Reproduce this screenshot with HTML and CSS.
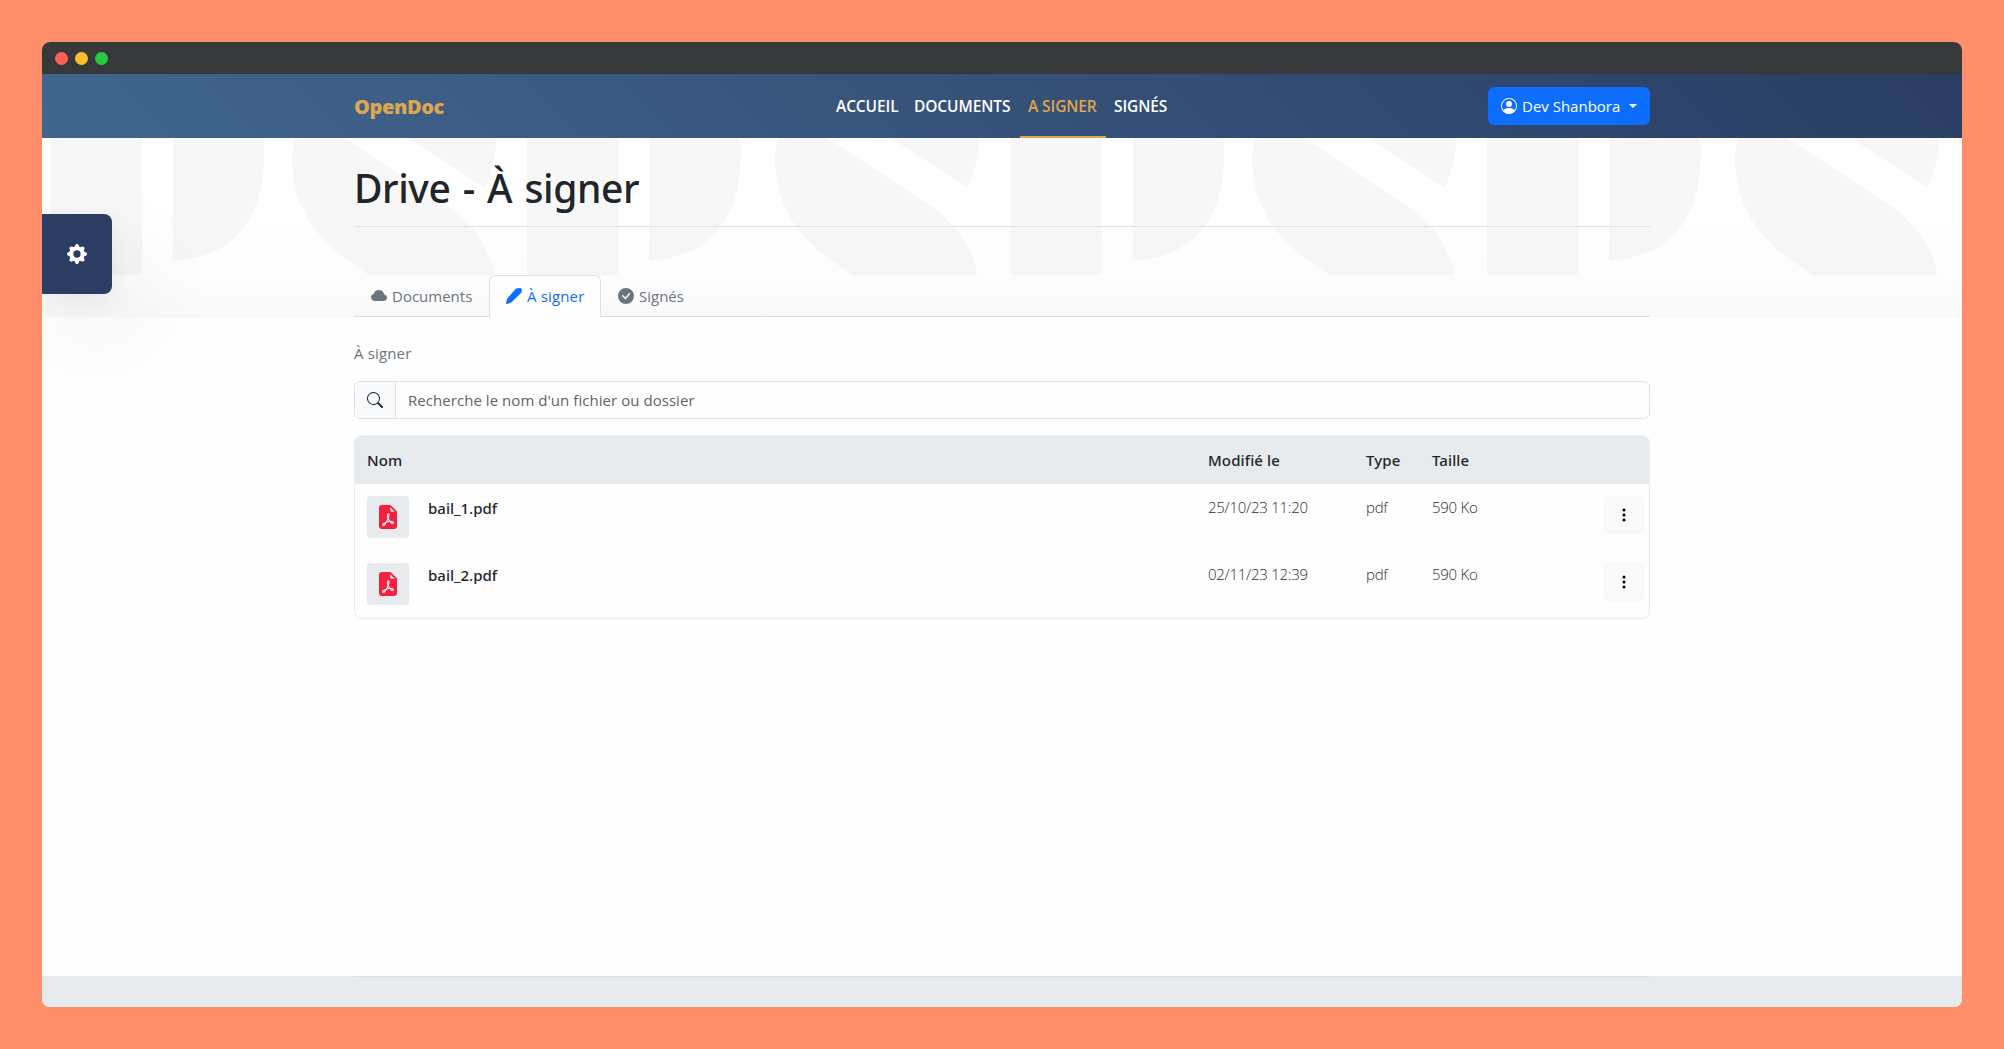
FILE: index.html
```html
<!DOCTYPE html>
<html lang="fr">
<head>
<meta charset="utf-8">
<title>OpenDoc - À signer</title>
<link rel="stylesheet" href="styles.css">
</head>
<body>
<svg class="defs" width="0" height="0" aria-hidden="true">
  <defs>
    <g id="mark-d">
      <path d="M0 0H91.500V122L90.500 137H0Z"/>
      <path d="M122 0H213.500V22C213.500 80 180 122 122 122Z"/>
    </g>
    <g id="mark-s">
      <path d="M2.700 0H52L156 68C182 86 200 115 202 137H77L52 119C22 98 0 64 0 23Q0 10 2.700 0Z"/>
      <path d="M116 0H204.500Q204.500 26 192.500 50Z"/>
    </g>
    <symbol id="i-pdf" viewBox="0 0 16 16">
      <path d="M5.523 12.424q.21-.124.459-.238a8 8 0 0 1-.45.606c-.28.337-.498.516-.635.572l-.035.012a.3.300 0 0 1-.026-.044c-.056-.11-.054-.216.040-.360.106-.165.319-.354.647-.548m2.455-1.647q-.178.037-.356.078a21 21 0 0 0 .5-1.050 12 12 0 0 0 .510.858q-.326.048-.654.114m2.525.939a4 4 0 0 1-.435-.410q.344.007.612.054c.317.057.466.147.518.209a.1.100 0 0 1 .026.064.44.440 0 0 1-.060.200.300.300 0 0 1-.094.124.1.100 0 0 1-.069.015c-.090-.003-.258-.066-.498-.256M8.278 6.970c-.040.244-.108.524-.200.829a5 5 0 0 1-.089-.346c-.076-.353-.087-.630-.046-.822.038-.177.110-.248.196-.283a.5.500 0 0 1 .145-.040c.013.030.028.092.032.198q.008.183-.038.465z"/>
      <path fill-rule="evenodd" d="M4 0h5.293A1 1 0 0 1 10 .293L13.707 4a1 1 0 0 1 .293.707V14a2 2 0 0 1-2 2H4a2 2 0 0 1-2-2V2a2 2 0 0 1 2-2m5.500 1.500v2a1 1 0 0 0 1 1h2zM4.165 13.668c.090.180.230.343.438.419.207.075.412.040.580-.030.318-.130.635-.436.926-.786.333-.401.683-.927 1.021-1.510a11.600 11.600 0 0 1 1.997-.406c.300.383.610.713.910.950.280.220.603.403.934.417a.86.860 0 0 0 .510-.138c.155-.101.270-.247.354-.416.090-.181.145-.370.138-.563a.84.840 0 0 0-.200-.518c-.226-.270-.596-.400-.960-.465a5.800 5.800 0 0 0-1.335-.050 11 11 0 0 1-.980-1.686c.250-.660.437-1.284.520-1.794.036-.218.055-.426.048-.614a1.240 1.240 0 0 0-.127-.538.700.700 0 0 0-.477-.365c-.202-.043-.410 0-.601.077-.377.150-.576.470-.651.823-.073.340-.040.736.046 1.136.088.406.238.848.430 1.295a20 20 0 0 1-1.062 2.227 7.700 7.700 0 0 0-1.482.645c-.370.220-.699.480-.897.787-.210.326-.275.714-.080 1.103"/>
    </symbol>
    <symbol id="i-dots" viewBox="0 0 16 16"><path d="M9.500 13a1.500 1.500 0 1 1-3 0 1.500 1.500 0 0 1 3 0m0-5a1.500 1.500 0 1 1-3 0 1.500 1.500 0 0 1 3 0m0-5a1.500 1.500 0 1 1-3 0 1.500 1.500 0 0 1 3 0"/></symbol>
  </defs>
</svg>

<div class="window">
  <div class="titlebar"><span class="light red"></span><span class="light yellow"></span><span class="light green"></span></div>

  <header class="navbar">
    <div class="container bar">
      <a class="brand">OpenDoc</a>
      <nav class="menu">
        <a class="m1">ACCUEIL</a><a class="m2">DOCUMENTS</a><a class="m3 active">A SIGNER</a><a class="m4">SIGNÉS</a>
      </nav>
      <button class="user">
        <svg class="icon" viewBox="0 0 16 16"><path d="M11 6a3 3 0 1 1-6 0 3 3 0 0 1 6 0"/><path fill-rule="evenodd" d="M0 8a8 8 0 1 1 16 0A8 8 0 0 1 0 8m8-7a7 7 0 0 0-5.468 11.370C3.242 11.226 4.805 10 8 10s4.757 1.225 5.468 2.370A7 7 0 0 0 8 1"/></svg>
        <span class="user-name">Dev Shanbora</span><span class="caret"></span>
      </button>
    </div>
  </header>

  <section class="hero">
    <svg class="pattern" width="1920" height="137" viewBox="0 0 1920 137">
      <g id="tile"><use href="#mark-d" x="8.500"/><use href="#mark-s" x="250"/><use href="#mark-d" x="485"/><use href="#mark-s" x="733"/></g>
      <use href="#tile" x="960"/>
    </svg>
    <div class="container hero-body">
      <h1>Drive - À signer</h1>
      <div class="tabs">
        <a class="tab t1"><svg class="icon" viewBox="0 0 16 16"><path d="M4.406 3.342A5.530 5.530 0 0 1 8 2c2.690 0 4.923 2 5.166 4.579C14.758 6.804 16 8.137 16 9.773 16 11.569 14.502 13 12.687 13H3.781C1.708 13 0 11.366 0 9.318c0-1.763 1.266-3.223 2.942-3.593.143-.863.698-1.723 1.464-2.383"/></svg><span>Documents</span></a>
        <a class="tab t2 active"><svg class="icon" viewBox="0 0 16 16"><path d="M9.300 1.200Q10.500 0 12 .2L14.200 0Q16 .1 15.900 2L15.500 4.600 5.800 14Q3.500 15.400 0 16 .2 12.600 1.700 10Z"/></svg><span>À signer</span></a>
        <a class="tab t3"><svg class="icon" viewBox="0 0 16 16"><path d="M16 8A8 8 0 1 1 0 8a8 8 0 0 1 16 0m-3.970-3.030a.75.750 0 0 0-1.080.022L7.477 9.417 5.384 7.323a.75.750 0 0 0-1.060 1.060L6.970 11.030a.75.750 0 0 0 1.079-.020l3.992-4.990a.75.750 0 0 0-.010-1.050z"/></svg><span>Signés</span></a>
      </div>
    </div>
  </section>

  <main class="container content">
    <p class="crumb">À signer</p>
    <div class="search">
      <span class="search-icon"><svg class="icon" viewBox="0 0 16 16"><path d="M11.742 10.344a6.500 6.500 0 1 0-1.397 1.398h-.001q.044.060.098.115l3.850 3.850a1 1 0 0 0 1.415-1.414l-3.850-3.850a1 1 0 0 0-.115-.100zM12 6.500a5.500 5.500 0 1 1-11 0 5.500 5.500 0 0 1 11 0"/></svg></span>
      <span class="search-field">Recherche le nom d'un fichier ou dossier</span>
    </div>
    <div class="files">
      <div class="row head"><span>Nom</span><span>Modifié le</span><span>Type</span><span>Taille</span><span></span></div>
      <div class="row">
        <div class="name"><span class="thumb"><svg viewBox="0 0 16 16"><use href="#i-pdf"/></svg></span><span class="file">bail_1.pdf</span></div>
        <span class="meta">25/10/23 11:20</span><span class="meta">pdf</span><span class="meta">590 Ko</span>
        <button class="more"><svg viewBox="0 0 16 16"><use href="#i-dots"/></svg></button>
      </div>
      <div class="row">
        <div class="name"><span class="thumb"><svg viewBox="0 0 16 16"><use href="#i-pdf"/></svg></span><span class="file">bail_2.pdf</span></div>
        <span class="meta">02/11/23 12:39</span><span class="meta">pdf</span><span class="meta">590 Ko</span>
        <button class="more"><svg viewBox="0 0 16 16"><use href="#i-dots"/></svg></button>
      </div>
    </div>
  </main>

  <footer class="footer"><div class="container footer-rule"></div></footer>

  <button class="settings"><svg viewBox="0 0 16 16"><path fill-rule="evenodd" d="M9.405 1.050c-.413-1.400-2.397-1.400-2.810 0l-.100.340a1.464 1.464 0 0 1-2.105.872l-.310-.170c-1.283-.698-2.686.705-1.987 1.987l.169.311c.446.820.023 1.841-.872 2.105l-.340.100c-1.400.413-1.400 2.397 0 2.810l.340.100a1.464 1.464 0 0 1 .872 2.105l-.170.310c-.698 1.283.705 2.686 1.987 1.987l.311-.169a1.464 1.464 0 0 1 2.105.872l.100.340c.413 1.400 2.397 1.400 2.810 0l.100-.340a1.464 1.464 0 0 1 2.105-.872l.310.170c1.283.698 2.686-.705 1.987-1.987l-.169-.311a1.464 1.464 0 0 1 .872-2.105l.340-.100c1.400-.413 1.400-2.397 0-2.810l-.340-.100a1.464 1.464 0 0 1-.872-2.105l.170-.310c.698-1.283-.705-2.686-1.987-1.987l-.311.169a1.464 1.464 0 0 1-2.105-.872zM8 10.930a2.929 2.929 0 1 1 0-5.860 2.929 2.929 0 0 1 0 5.858z"/></svg></button>
</div>
</body>
</html>
```
FILE: styles.css
```css
* { box-sizing: border-box; }

body {
  margin: 0;
  padding: 42px;
  height: 1049px;
  background: #ff8e6b;
  color: #212529;
  font-family: "Open Sans", "Noto Sans", sans-serif;
  font-size: 15px;
  line-height: 24px;
  white-space: nowrap;
}

button { font: inherit; border: 0; padding: 0; }
.defs { position: absolute; }
.icon { width: 16px; height: 16px; fill: currentColor; flex: none; }
.container { width: 1296px; margin: 0 auto; }

.window {
  position: relative;
  display: flex;
  flex-direction: column;
  height: 965px;
  border-radius: 8px;
  overflow: hidden;
  background: #fefefe;
}

.titlebar {
  display: flex;
  align-items: center;
  gap: 7px;
  height: 32px;
  padding: 1px 13px 0;
  background: #373839;
}
.light { width: 13px; height: 13px; border-radius: 50%; }
.red { background: #ff5f57; }
.yellow { background: #febc2e; }
.green { background: #28c840; }

.navbar { height: 64px; background: linear-gradient(45deg, #41668e, #2b3d63); }
.bar {
  display: grid;
  grid-template-columns: 474px 1fr 162px;
  height: 64px;
  align-items: center;
}
.brand { color: #dfa64f; font-size: 20px; font-weight: 800; letter-spacing: -.400px; padding-top: 2px; }
.menu { display: flex; height: 64px; color: #fff; font-size: 15.500px; font-weight: 600; letter-spacing: -.100px; }
.menu a { padding: 20px 8px 0; height: 64px; }
.menu .active { color: #dfa64f; border-bottom: 2px solid #dfa64f; }
.m1 { width: 78px; }
.m2 { width: 114px; }
.m3 { width: 86px; }

.user {
  display: flex;
  align-items: center;
  height: 38px;
  padding: 0 13px;
  border-radius: 6px;
  background: #0d6efd;
  color: #fff;
}
.user-name { flex: 1; padding-left: 5px; text-align: left; }
.caret { border: 4.500px solid transparent; border-top-color: #fff; border-bottom: 0; }

.hero {
  display: grid;
  height: 179px;
  background: #fff;
}
.hero::after {
  content: "";
  grid-area: 1 / 1;
  background: linear-gradient(rgba(0, 0, 0, 0) 40%, rgba(0, 0, 0, .006) 75%, rgba(0, 0, 0, .022));
}
.pattern { grid-area: 1 / 1; fill: #f7f7f7; }
.hero-body { grid-area: 1 / 1; z-index: 1; }
h1 {
  margin: 0 0 48px;
  height: 89px;
  padding-top: 26px;
  border-bottom: 1px solid #dee2e6;
  font-family: "Noto Sans", sans-serif;
  font-size: 39px;
  font-weight: 500;
  line-height: 48px;
  letter-spacing: -.400px;
  word-spacing: 2.500px;
}

.tabs { display: flex; height: 42px; border-bottom: 1px solid #dadde2; color: #6c757d; }
.tab {
  display: flex;
  align-items: center;
  gap: 5px;
  height: 42px;
  padding: 0 16px 2px;
  border: 1px solid transparent;
  border-bottom: 0;
  border-radius: 6px 6px 0 0;
}
.tab.active { background: #fefefe; border-color: #dee2e6; color: #0d6efd; }
.t1 { width: 135px; }
.t2 { width: 112px; }
.t2, .crumb { letter-spacing: .150px; }

.content { flex: 1; }
.crumb { margin: 24px 0 16px; color: #6c757d; }
.search {
  display: flex;
  height: 38px;
  margin-bottom: 16px;
  border: 1px solid #dee2e6;
  border-radius: 6px;
  overflow: hidden;
}
.search-icon {
  display: flex;
  align-items: center;
  justify-content: center;
  width: 41px;
  background: #f8f9fa;
  border-right: 1px solid #dee2e6;
}
.search-field { padding: 6px 12px; color: #5f6469; letter-spacing: .050px; }

.files { border: 1px solid #e9ecef; border-radius: 8px; overflow: hidden; }
.row {
  display: grid;
  grid-template-columns: 841px 158px 66px 171px 42px;
  height: 67px;
  padding: 12px 4px 0 12px;
  border-bottom: 1px solid #f8f9fa;
}
.row.head {
  height: 48px;
  background: #e7ebee;
  border: 0;
  font-family: "Noto Sans", sans-serif;
  font-weight: 500;
  letter-spacing: .100px;
}
.name { display: flex; gap: 19px; }
.thumb {
  display: grid;
  place-items: center;
  width: 42px;
  height: 42px;
  border-radius: 4px;
  background: #e7ebee;
}
.thumb svg { width: 24px; height: 24px; fill: #f1213f; }
.file { font-family: "Noto Sans", sans-serif; font-weight: 500; }
.meta { margin-top: -1px; color: #2b2f33; font-weight: 300; letter-spacing: -.250px; }
.more {
  display: grid;
  place-items: center;
  height: 38px;
  border-radius: 6px;
  background: #f8f9fa;
}
.more svg { width: 16px; height: 16px; }

.footer { height: 31px; background: #e7ebee; }
.footer-rule { border-top: 1px solid #dadde1; }

/* drawer handle pinned over the page's left edge */
.settings {
  position: absolute;
  left: 0;
  top: 172px;
  z-index: 2;
  display: grid;
  place-items: center;
  width: 70px;
  height: 80px;
  border-radius: 0 8px 8px 0;
  background: #2b3d63;
  box-shadow: 0 8px 24px rgba(0, 0, 0, .060), 20px 40px 100px rgba(0, 0, 0, .080);
}
.settings svg { width: 20px; height: 20px; fill: #fff; }
```
